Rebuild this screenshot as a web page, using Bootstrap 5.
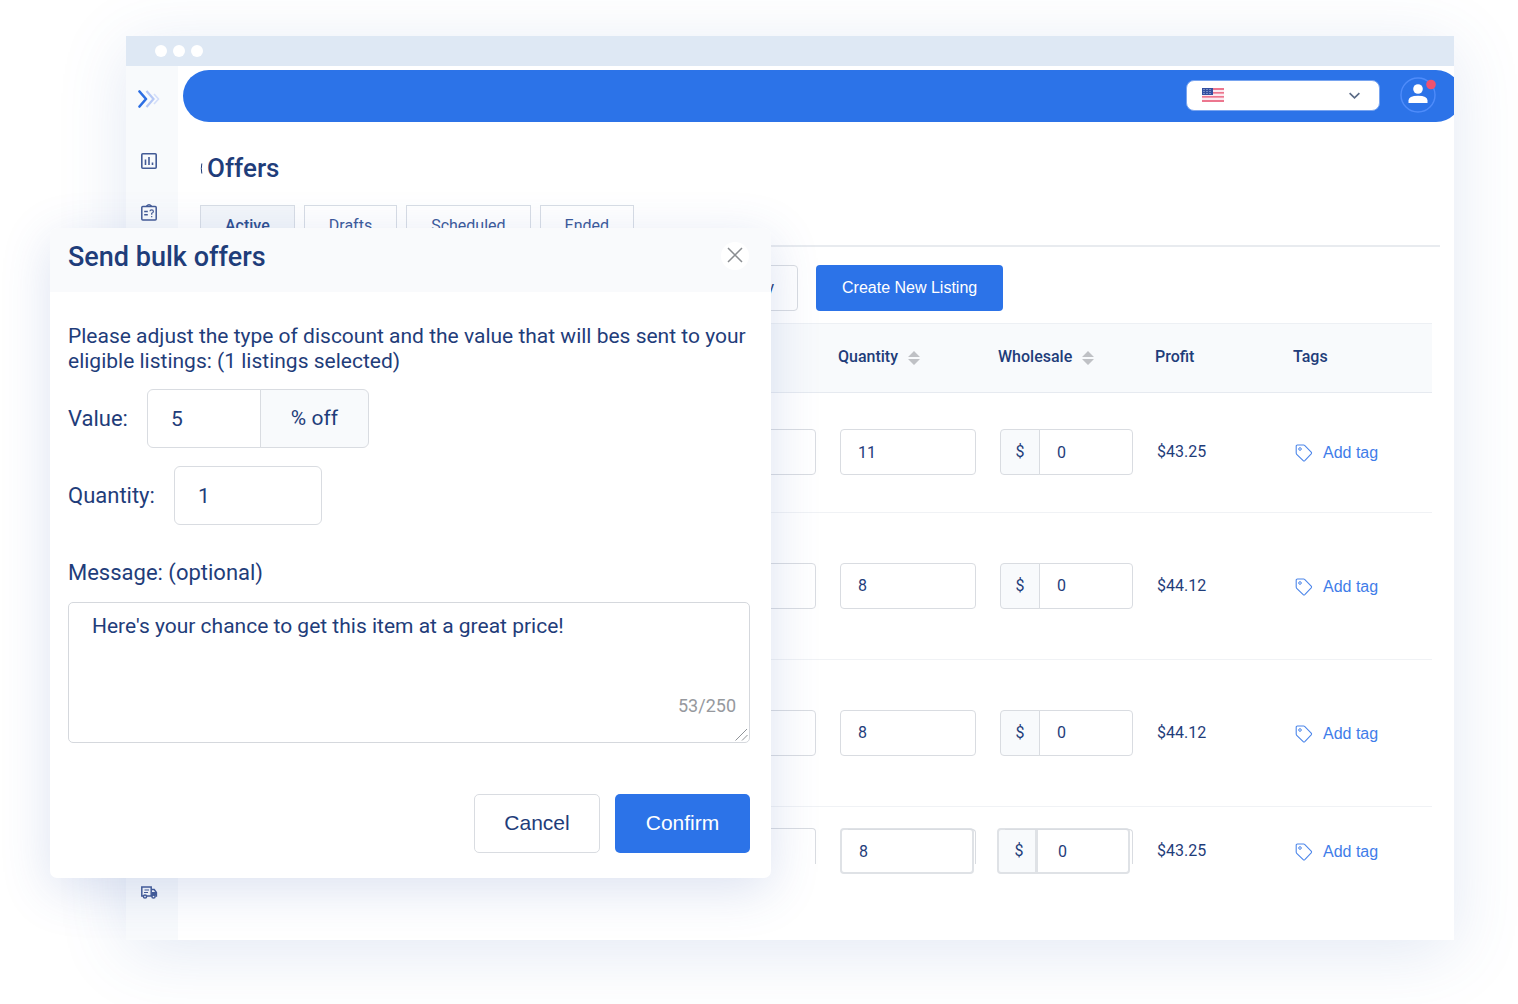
<!DOCTYPE html>
<html lang="en">
<head>
<meta charset="utf-8">
<meta name="viewport" content="width=device-width, initial-scale=1">
<title>Offers</title>
<link href="https://cdn.jsdelivr.net/npm/bootstrap@5.3.0/dist/css/bootstrap.min.css" rel="stylesheet">
<style>
  :root { --navy: #1f3d7a; --brand: #2c73e8; --line: #d9dce1; --pale: #f8fafc; }
  body { font-family: Roboto, "Liberation Sans", sans-serif; color: var(--navy); background: #fff; overflow-x: hidden; }
  .stage { position: relative; padding: 36px 64px 64px 126px; overflow: hidden; }
  .app-window { overflow: hidden; background: #fff; box-shadow: 0 12px 64px rgba(70,110,180,.15); }
  .title-bar { height: 30px; padding-left: 29px; gap: 6px; background: #dee8f4; }
  .title-bar span { width: 12px; height: 12px; border-radius: 50%; background: #fff; }
  .side { width: 52px; padding: 22px 6px 38px 0; background: var(--pale); }
  .side a { display: flex; justify-content: center; line-height: 0; }
  .side .logo-link { margin-bottom: 41px; }
  .side .first-link { margin-bottom: 32px; }
  .main-col { min-width: 0; padding-bottom: 41px; }
  .top-bar { height: 52px; margin: 4px -8px 0 5px; padding: 0 26px 2px 0; gap: 20px; border-radius: 26px; background: var(--brand); }
  .region { width: 194px; height: 31px; padding: 0 0 0 15px; border: 1px solid #78a4f0; border-radius: 8px; background: #fff; }
  .region select { height: 28px; padding: 0 36px 0 8px; border: 0; background-color: transparent; background-position: right 18px center; background-size: 13px 13px; background-image: url("data:image/svg+xml,%3csvg xmlns='http://www.w3.org/2000/svg' viewBox='0 0 16 16'%3e%3cpath fill='none' stroke='%235b6b86' stroke-width='2' d='m2 5 6 6 6-6'/%3e%3c/svg%3e"); }
  .avatar { width: 36px; height: 36px; padding: 0; border: 0; background: none; line-height: 0; }
  .content { padding: 28px 22px 0 22px; }
  .page-title { font-size: 26px; line-height: 36px; font-weight: 500; gap: 4px; }
  .tab-row { margin: 19px -8px 0 0; gap: 9px; border-bottom: 2px solid #e8ebef; }
  .tab-row .nav-link { height: 40px; padding: 0 24px; border: 1px solid #d8dde5; border-bottom: 0; border-radius: 0; font-size: 16px; line-height: 40px; color: #3c5a9a; margin: 0; }
  .tab-row .nav-link.active { background: #f3f6fa; color: #2f4f90; font-weight: 500; }
  .tools { margin-top: 18px; gap: 18px; }
  .tools .btn { height: 46px; border-radius: 4px; font-size: 16px; }
  .tool-wide { width: 598px; padding: 0 23px; text-align: right; border: 1px solid var(--line); color: var(--navy); }
  .tool-new { padding: 0 25px; font-family: "Liberation Sans", sans-serif; background: var(--brand); color: #fff; }
  .listing { width: 100%; margin: 12px 0 0; table-layout: fixed; font-size: 16px; }
  .listing th { height: 69px; padding: 0 10px 2px; vertical-align: middle; font-weight: 500; background: var(--pale); border-top: 1px solid #edf0f4; border-bottom: 1px solid #e6eaf0; color: var(--navy); }
  .listing td { height: 147px; padding: 0 12px 1px; vertical-align: middle; border-bottom: 1px solid #f0f2f5; color: var(--navy); }
  .listing .row-first td { height: 120px; }
  .listing .row-last td { height: 92px; padding-bottom: 3px; border: 0; }
  .c-qty { width: 160px; } .c-whole { width: 157px; } .c-profit { width: 138px; } .c-tags { width: 149px; }
  .cell-input, .cell-group .input-group-text { height: 46px; border: 1px solid var(--line); border-radius: 4px; font-size: 16px; color: var(--navy); }
  .cell-input { padding: 0 17px; }
  .cell-group .input-group-text { width: 40px; padding: 0; justify-content: center; background: var(--pale); }
  .sort-icon { margin-left: 10px; }
  .tag-link { padding-top: 2px; gap: 10px; font-family: "Liberation Sans", sans-serif; color: #3f7de9; text-decoration: none; }
  .echo { position: relative; }
  .echo::after { content: ""; position: absolute; inset: 1px 0 10px 8px; border: 1px solid var(--line); border-left: 0; border-bottom: 0; border-radius: 0 4px 0 0; pointer-events: none; }
  .echo > .form-control { width: calc(100% - 2px); }
  .echo .cell-input, .echo .input-group-text { border-width: 2px; border-color: #dfe2e6; }
  .echo-group { margin-left: -3px; }
  .echo-group .input-group { width: calc(100% - 3px); }
  .echo-group .input-group-text { padding-left: 4px; }
  .echo-group .cell-input { padding-left: 20px; }
  .cut-off { height: 36px; margin-bottom: 10px; border-bottom: 0; border-radius: 4px 4px 0 0; }
  .offer-dialog { position: absolute; left: 50px; top: 228px; width: 721px; border-radius: 7px; overflow: hidden; background: #fff; }
  .dialog-shade { box-shadow: 0 12px 50px rgba(60,95,175,.18); }
  .dialog-head { height: 64px; padding: 0 22px 8px 18px; background: #f9fafc; }
  .dialog-head h2 { padding-top: 2px; font-size: 27px; line-height: 30px; font-weight: 500; margin: 0; }
  .close-btn { width: 28px; height: 28px; padding: 0; border: 0; border-radius: 50%; background: #fff; line-height: 0; }
  .dialog-body { padding: 32px 21px 0 18px; }
  .dialog-body p { margin: 0 0 15px; font-size: 21px; line-height: 25px; }
  .dialog-body label { font-size: 22px; line-height: 26px; }
  .big-row { gap: 19px; margin-bottom: 18px; }
  .big-row .form-control, .big-row .input-group-text { height: 59px; border: 1px solid var(--line); border-radius: 6px; font-size: 21px; color: var(--navy); padding: 0 23px; }
  .value-group { width: 222px; }
  .value-group .input-group-text { width: 109px; padding: 0 !important; justify-content: center; background: var(--pale); }
  .qty-box { width: 148px; }
  .msg-label { display: block; margin: 35px 0 16px; }
  .msg-wrap { position: relative; }
  .msg-wrap textarea { height: 141px; padding: 10px 23px; border: 1px solid #d5d8dd; border-radius: 5px; font-size: 21px; line-height: 26px; color: var(--navy); resize: none; }
  .msg-count { position: absolute; right: 14px; bottom: 25px; font-size: 18px; line-height: 24px; color: #96999e; }
  .grip { position: absolute; right: 2px; bottom: 2px; }
  .dialog-foot { padding: 51px 21px 25px; gap: 15px; }
  .dialog-foot .btn { height: 59px; border-radius: 5px; font-family: "Liberation Sans", sans-serif; font-size: 21px; padding: 0 0 2px; }
  .btn-cancel { width: 126px; border: 1px solid var(--line); color: var(--navy); }
  .btn-confirm { width: 135px; background: var(--brand); color: #fff; }
</style>
<script src="https://cdn.jsdelivr.net/npm/bootstrap@5.3.0/dist/js/bootstrap.bundle.min.js"></script>
</head>
<body>
<svg width="0" height="0" class="position-absolute" aria-hidden="true">
  <symbol id="tag" viewBox="0 0 18 18"><path d="M1.2 2.2Q1.2 1 2.4 1h6.200q.6 0 1 .4l6.600 6.800q.7.8 0 1.600l-6.400 6.800q-.8.8-1.600 0L1.700 10.300q-.5-.5-.5-1.200z" fill="none" stroke="#4c86ea" stroke-width="1.100"/><circle cx="5" cy="5" r="1.300" fill="none" stroke="#4c86ea"/></symbol>
  <symbol id="sort" viewBox="0 0 12 14"><path d="M0 6 6 0l6 6zM0 8h12l-6 6z" fill="#bfc1c5"/></symbol>
</svg>
<div class="stage">
  <div class="app-window">
    <div class="title-bar d-flex align-items-center"><span></span><span></span><span></span></div>
    <div class="d-flex">
      <nav class="side d-flex flex-column flex-shrink-0" aria-label="Main">
        <a href="#" class="logo-link" aria-label="Expand menu"><svg width="22" height="22" viewBox="0 0 22 22" fill="none"><path d="m16 6 4.500 5-4.500 5" stroke="#d3defa" stroke-width="1.600"/><path d="m8.500 3 7 8-7 8" stroke="#b5c8f6" stroke-width="2.200"/><path d="m1.500 3.500 6.500 7.500-6.500 7.500" stroke="#2c6ee3" stroke-width="2.600" stroke-linecap="round" stroke-linejoin="round"/></svg></a>
        <a href="#" class="first-link" aria-label="Statistics"><svg width="18" height="20" viewBox="0 0 18 20" fill="none" stroke="#435b96" stroke-width="1.600"><rect x="1.800" y="2.800" width="14.400" height="14.400" rx="1"/><path d="M5.500 8.500V14M9 6v8M12.500 11.500V14"/></svg></a>
        <a href="#" aria-label="Tasks"><svg width="18" height="20" viewBox="0 0 18 20" fill="none" stroke="#435b96" stroke-width="1.500"><rect x="1.800" y="3.500" width="14.400" height="13.500" rx="1"/><path d="M6.500 3.200Q9 .5 11.500 3.200M4.200 8.500h3.600M4.200 11.800h3.600"/><path d="M10 8.300Q10 6.800 11.700 6.800T13.400 8.400Q13.400 9.500 11.700 10.300v1.400M11.700 12.900v1.300" stroke-width="1.200"/></svg></a>
        <a href="#" class="mt-auto" aria-label="Shipping"><svg width="18" height="20" viewBox="0 0 18 20" fill="none" stroke="#435b96" stroke-width="1.500"><path d="M3 14H1.800V5h9.400v9H7M11.200 7.500h3l2.200 3V14h-1M11.200 14h1"/><path d="M12 10h4.300v3.500H12z" fill="#435b96" stroke="none"/><circle cx="5" cy="14.500" r="1.600"/><circle cx="13.500" cy="14.500" r="1.600"/><path d="M4.500 8h4.500M4 10.500h4" stroke-width="1"/></svg></a>
      </nav>
      <div class="main-col flex-grow-1">
        <header class="top-bar d-flex align-items-center justify-content-end">
          <div class="region d-flex align-items-center">
            <svg width="22" height="14" viewBox="0 0 22 14" class="flex-shrink-0" aria-hidden="true"><path fill="#fbe9ef" d="M0 0h22v14H0z"/><path stroke="#e8506f" stroke-width="1.400" d="M0 1h22M0 4.900h22M0 8.900h22M0 13h22"/><path fill="#3450a0" d="M0 0h11v7H0z"/><path stroke="#b9c7ec" stroke-dasharray="1 2" d="M1.500 1.500H10M1.500 3.500H10M1.500 5.500H10"/></svg>
            <select class="form-select" aria-label="Marketplace"><option value="us" aria-label="United States"></option></select>
          </div>
          <button class="avatar" aria-label="Account"><svg width="36" height="36" viewBox="0 0 36 36"><circle cx="18" cy="18" r="17" fill="none" stroke="#4f8cfa" stroke-width="1.400"/><circle cx="18" cy="12" r="4.800" fill="#fff"/><path d="M8.500 26v-2.500q0-4.800 9.500-4.800t9.500 4.800V26z" fill="#fff"/><circle cx="31" cy="7.500" r="4.800" fill="#f0526f"/></svg></button>
        </header>
        <main class="content">
          <h1 class="page-title d-flex align-items-center mb-0"><svg width="3" height="12" viewBox="0 0 3 12" fill="none" aria-hidden="true"><path d="M1.800 1.500q-1 5 0 10" stroke="#1f3d7a"/></svg>Offers</h1>
          <ul class="nav tab-row">
            <li class="nav-item"><a class="nav-link active" href="#">Active</a></li>
            <li class="nav-item"><a class="nav-link" href="#">Drafts</a></li>
            <li class="nav-item"><a class="nav-link" href="#">Scheduled</a></li>
            <li class="nav-item"><a class="nav-link" href="#">Ended</a></li>
          </ul>
          <div class="tools d-flex">
            <button class="btn tool-wide">y</button>
            <button class="btn tool-new">Create New Listing</button>
          </div>
          <table class="listing">
            <colgroup><col><col class="c-qty"><col class="c-whole"><col class="c-profit"><col class="c-tags"></colgroup>
            <thead><tr><th></th>
              <th scope="col">Quantity<svg class="sort-icon" width="12" height="14"><use href="#sort"/></svg></th>
              <th scope="col">Wholesale<svg class="sort-icon" width="12" height="14"><use href="#sort"/></svg></th>
              <th scope="col">Profit</th><th scope="col">Tags</th></tr></thead>
            <tbody>
              <tr class="row-first"><td><input class="form-control cell-input" aria-label="Price"></td>
                <td><input class="form-control cell-input" value="11" aria-label="Quantity"></td>
                <td><div class="input-group cell-group"><span class="input-group-text">$</span><input class="form-control cell-input" value="0" aria-label="Wholesale"></div></td>
                <td>$43.25</td><td><a href="#" class="tag-link d-flex align-items-center"><svg width="18" height="18"><use href="#tag"/></svg>Add tag</a></td></tr>
              <tr><td><input class="form-control cell-input" aria-label="Price"></td>
                <td><input class="form-control cell-input" value="8" aria-label="Quantity"></td>
                <td><div class="input-group cell-group"><span class="input-group-text">$</span><input class="form-control cell-input" value="0" aria-label="Wholesale"></div></td>
                <td>$44.12</td><td><a href="#" class="tag-link d-flex align-items-center"><svg width="18" height="18"><use href="#tag"/></svg>Add tag</a></td></tr>
              <tr><td><input class="form-control cell-input" aria-label="Price"></td>
                <td><input class="form-control cell-input" value="8" aria-label="Quantity"></td>
                <td><div class="input-group cell-group"><span class="input-group-text">$</span><input class="form-control cell-input" value="0" aria-label="Wholesale"></div></td>
                <td>$44.12</td><td><a href="#" class="tag-link d-flex align-items-center"><svg width="18" height="18"><use href="#tag"/></svg>Add tag</a></td></tr>
              <tr class="row-last"><td><input class="form-control cell-input cut-off" aria-label="Price"></td>
                <td><div class="echo"><input class="form-control cell-input" value="8" aria-label="Quantity"></div></td>
                <td><div class="echo echo-group"><div class="input-group cell-group"><span class="input-group-text">$</span><input class="form-control cell-input" value="0" aria-label="Wholesale"></div></div></td>
                <td>$43.25</td><td><a href="#" class="tag-link d-flex align-items-center"><svg width="18" height="18"><use href="#tag"/></svg>Add tag</a></td></tr>
            </tbody>
          </table>
        </main>
      </div>
    </div>
  </div>

  <form class="offer-dialog dialog-shade" role="dialog" aria-labelledby="dlg-title">
    <div class="dialog-head d-flex align-items-center justify-content-between">
      <h2 id="dlg-title">Send bulk offers</h2>
      <button type="button" class="close-btn" aria-label="Close"><svg width="28" height="28" viewBox="0 0 28 28"><path d="m7 6 14 14M21 6 7 20" stroke="#8a8d91" stroke-width="1.500"/></svg></button>
    </div>
    <div class="dialog-body">
      <p>Please adjust the type of discount and the value that will bes sent to your eligible listings: (1 listings selected)</p>
      <div class="big-row d-flex align-items-center">
        <label for="val">Value:</label>
        <div class="input-group value-group"><input id="val" class="form-control" value="5"><span class="input-group-text">% off</span></div>
      </div>
      <div class="big-row d-flex align-items-center">
        <label for="qty">Quantity:</label>
        <input id="qty" class="form-control qty-box" value="1">
      </div>
      <label for="msg" class="msg-label">Message: (optional)</label>
      <div class="msg-wrap">
        <textarea id="msg" class="form-control">Here's your chance to get this item at a great price!</textarea>
        <span class="msg-count">53/250</span>
        <svg class="grip" width="13" height="13" viewBox="0 0 13 13" aria-hidden="true"><path d="M.5 12.500 12 1M7 12.500 12.500 7" stroke="#8f9398"/></svg>
      </div>
    </div>
    <div class="dialog-foot d-flex justify-content-end">
      <button type="button" class="btn btn-cancel">Cancel</button>
      <button type="button" class="btn btn-confirm">Confirm</button>
    </div>
  </form>
</div>
</body>
</html>
